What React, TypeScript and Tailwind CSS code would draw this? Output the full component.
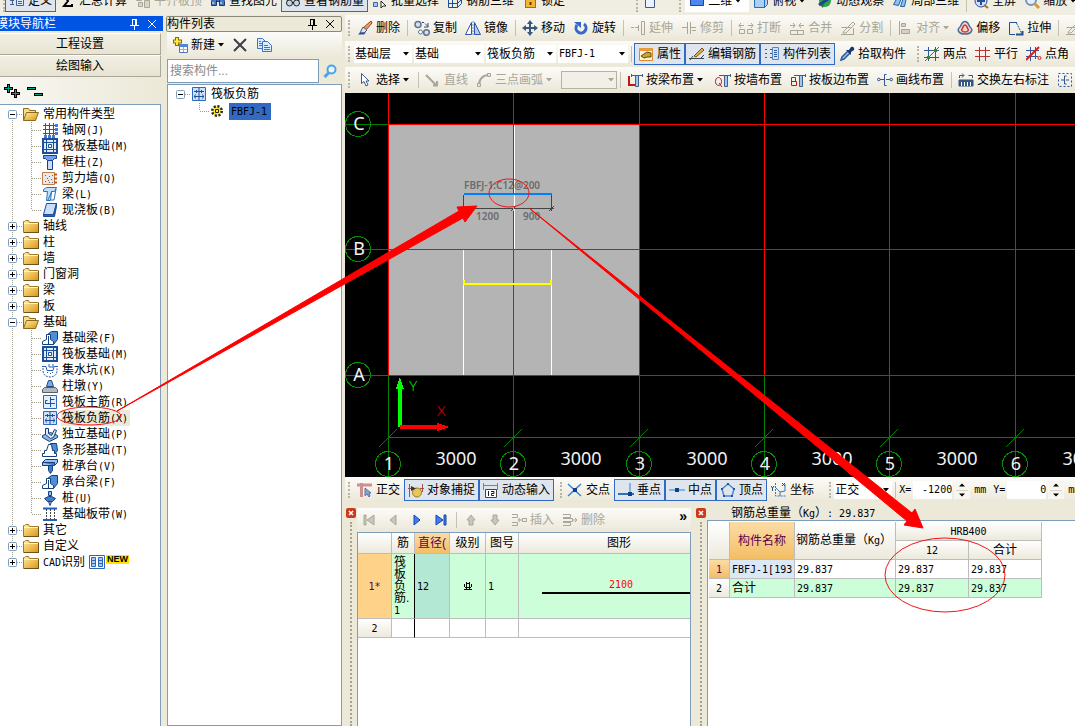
import { type ReactNode } from "react";
import clsx from "clsx";

const pen = { fill: "none", strokeWidth: 1 } as const;
const BLUE = "#1c4f96";
const GREY = "#a9a698";

// 16x16 glyphs shared by the toolbars and the trees
const icons: Record<string, ReactNode> = {
  define: (
    <g {...pen} stroke="#44618f">
      <path d="M1 11.5h4M3.5 3v9M7.5 2.5h7v10h-7z" fill="#dfe8f5" />
      <path d="M9 5.5h4M9 8.5h4M9 10.5h4M1 3.5h4M1 7.5h4" />
    </g>
  ),
  sigma: <path d="M4 3h8v2M4 3l4 5-4 5h8v-2" fill="none" stroke="#000" strokeWidth="2" />,
  level: (
    <g fill="#d8d5c8" stroke={GREY}>
      <path d="M1.5 2.5h5v5h-5zM3.5 9.5h4v4h-4zM9.5 7.5h5v7h-5zM10.500 1.500h3v4h-3z" />
    </g>
  ),
  find: (
    <g fill="#4b7ac4" stroke="#17356e">
      <path d="M1.500 8.500l2-6h3v10h-5zM9.500 2.500h3l2 6v4h-5zM6.500 5.500h3v3h-3z" />
      <path d="M3 9v2M11 9v2" stroke="#fff" />
    </g>
  ),
  glasses: (
    <g {...pen} stroke="#222">
      <circle cx="4.500" cy="10" r="3" fill="#c9d6e8" />
      <circle cx="11.500" cy="10" r="3" fill="#c9d6e8" />
      <path d="M7 9.500h2M2 8l3-4M14 8l-2-4" />
    </g>
  ),
  batch: (
    <g {...pen} stroke="#3f63ad">
      <path d="M1.500 2.500h4v4h-4zM1.500 9.500h4v4h-4z" fill="#a9c4ee" />
      <path d="M8 3.500h6M8 6.500h6" />
      <path d="M9 8l5 5h-3l-2 2z" fill="#fff" stroke="#222" />
    </g>
  ),
  cube: (
    <g {...pen} stroke={BLUE}>
      <path d="M1.500 5.500h9v9h-9zM1.500 5.500l4-4h9v9l-4 4M10.500 5.500l4-4M5.500 1.500v13M1.500 10.500h9l4-4" />
    </g>
  ),
  lock: (
    <g>
      <path d="M5.500 8V4a2.500 2.500 0 0 1 5 0v4" fill="none" stroke="#8a8a8a" strokeWidth="2" />
      <rect x="3.500" y="6.500" width="10" height="8" fill="#f5b535" stroke="#a86d0c" />
      <path d="M8.500 9v3" stroke="#5b3b06" strokeWidth="2" />
    </g>
  ),
  page: <path d="M3.500 1.500h9v13h-9z" fill="#eaf3ff" stroke="#3d5a8c" />,
  screen: <path d="M1.500 3.500h13v9h-13z" fill="#4f86f0" stroke="#1c43a0" />,
  box: (
    <g fill="#a9d0f5" stroke="#2b6cb0">
      <path d="M1.500 5.500l3-3h10v9l-3 3h-10z" />
      <path d="M1.500 5.500h10v9M11.500 5.500l3-3" fill="none" />
    </g>
  ),
  orbit: (
    <g>
      <circle cx="8" cy="8" r="6" fill="#2fa447" />
      <path d="M2 12L14 4" stroke="#1c43a0" strokeWidth="3" />
      <path d="M3 12l3 3 1-4z" fill="#1d7a2f" />
    </g>
  ),
  part3d: (
    <g fill="#8cc0ef" stroke="#2364a8">
      <path d="M1.500 11.500l5-9h4l-4 10zM8.500 13.500l3-9h3l-2 9z" />
    </g>
  ),
  full: (
    <g {...pen}>
      <circle cx="8" cy="8" r="6" fill="#cfe0f8" stroke="#2a4f9a" />
      <path d="M8 4v8M4 8h8" stroke="#2a4f9a" strokeWidth="2" />
      <path d="M11 12l4 3" stroke="#b06a2c" strokeWidth="2" />
    </g>
  ),
  zoom: (
    <g fill="none">
      <circle cx="7" cy="7" r="5" fill="#e3effc" stroke="#7c93b8" strokeWidth="2" />
      <path d="M11 11l4 4" stroke="#d69b28" strokeWidth="3" />
    </g>
  ),
  brush: (
    <g>
      <path d="M14 1l1 2-6 7-3-2z" fill="#f0a05a" stroke="#9c3a2a" />
      <path d="M6 7l4 3-3 3H3z" fill="#dfe3ee" stroke="#49577d" />
      <path d="M1 14.500h6l2-2H3z" fill="#2c4f96" />
    </g>
  ),
  copy: (
    <g {...pen} stroke="#5f7394">
      <circle cx="4" cy="4.500" r="3" fill="#d5e0ee" strokeWidth="1.500" />
      <circle cx="6.500" cy="12" r="2" fill="#fff" />
      <circle cx="12.500" cy="12.500" r="2.800" fill="#d5e0ee" strokeWidth="1.500" />
      <path d="M8 2.500h2M11 3.500l3 3M14 3v4h-4" stroke="#2c4a7c" />
    </g>
  ),
  mirror: (
    <g {...pen} stroke="#2b55ae">
      <path d="M.500 14.500L6.500 2.500v12z" fill="#fff" />
      <path d="M15.500 14.500L9.500 2.500v12z" fill="#b9cdf2" />
      <path d="M8 1v14" stroke="#7c8fb8" strokeDasharray="2 1" />
    </g>
  ),
  move: (
    <g fill="#38587e">
      <path d="M7 4h2v3h3v2H9v3H7V9H4V7h3z" />
      <path d="M8 0l3 4H5zM8 16l3-4H5zM0 8l4-3v6zM16 8l-4-3v6z" />
    </g>
  ),
  rotate: (
    <g>
      <path d="M11 4a5 5 0 1 1-7 1" fill="none" stroke="#3467c9" strokeWidth="3" />
      <path d="M1 2h7v6z" fill="#3467c9" />
    </g>
  ),
  extend: <path d="M1 7.500h3M5 7.500h3M8.500 5v6M11.500 1.500h3v13h-3z" fill="none" stroke={GREY} />,
  trim: <path d="M1 7.500h5M10 7.500h5M6.500 2v12M9.500 2v12M11 10.500h4" fill="none" stroke={GREY} />,
  breakIt: (
    <g fill="none" stroke={GREY}>
      <path d="M1.500 9.500h5v4h-5zM9.500 9.500h5v4h-5zM1 5.500h5M3 3L1 5.500 3 8M10 5.500h5M13 3l2 2.500L13 8" />
    </g>
  ),
  join: (
    <g fill="none" stroke={GREY}>
      <path d="M1.500 10.500h13v4h-13zM1 5.500h5M4 3l2 2.500L4 8M10 5.500h5M12 3l-2 2.500L12 8M8.500 10v4" />
    </g>
  ),
  split: <path d="M1.500 7.500h9M1 14.500h13M4 11l9-9 2 2-9 9H3zM13.500 8v6" fill="none" stroke={GREY} />,
  align: (
    <g fill="#d5d2c5" stroke={GREY}>
      <path d="M2.500 1v14M4.500 3.500h4v3h-4zM4.500 9.500h8v4h-8z" />
    </g>
  ),
  offset: (
    <g fill="none">
      <path d="M8 1.500c4 0 3 4 5.500 6s1.500 6.500-5.500 6.500S0 9.500 2.500 7.500 4 1.500 8 1.500z" fill="#f6d5cf" stroke="#4b6ea0" strokeWidth="1.500" />
      <path d="M8 5c2 0 2 3 3 4s0 3-3 3-4-2-3-3 1-4 3-4z" stroke="#c9392c" strokeWidth="1.500" />
    </g>
  ),
  stretch: (
    <g {...pen} stroke="#22508f">
      <path d="M9 2.500H1.500v12H7" />
      <path d="M8.500 3l5 10" strokeDasharray="2 1" />
      <path d="M8 14.500h6.500V11" strokeWidth="2" />
    </g>
  ),
  property: (
    <g>
      <path d="M1.500 2.500h13v12h-13z" fill="#fff3d6" stroke="#d88a2a" />
      <path d="M1 2h14v3H1z" fill="#e79b3c" />
      <path d="M3 10l6-4 4 1v4H9l-3 1z" fill="#caa62d" stroke="#5b4a12" />
    </g>
  ),
  editBar: (
    <g fill="none">
      <path d="M0 12.500h15M1 14l3-4M12 12l3-3" stroke="#3c4754" strokeWidth="1" />
      <path d="M5 10l8-8 2 2-8 7z" fill="#dfb24a" stroke="#7a4f1b" />
    </g>
  ),
  list: (
    <g {...pen} stroke="#38598f">
      <path d="M1 3.500h3M1 7.500h3M1 11.500h3M6 3.500h2M6 7.500h2M6 11.500h2" strokeDasharray="2 1" />
      <path d="M8.500 1.500h6v12h-6z" fill="#cfe2fb" stroke="#5b86c4" />
      <path d="M10 4.500h3M10 6.500h3M10 8.500h3M10 10.500h3" />
    </g>
  ),
  picker: (
    <g>
      <path d="M2 14l1-3 6-6 2 2-6 6z" fill="#9cc8f0" stroke="#2b5aa0" strokeWidth="1.500" />
      <path d="M7 4h3l2-3c2-1 4 1 3 3l-3 2v3z" fill="#17376e" />
    </g>
  ),
  twoPoint: (
    <g {...pen}>
      <path d="M0 4.500h15M0 11.500h15M4.500 1v14M11.500 1v14" stroke="#33559c" />
      <path d="M1 15L15 1" stroke="#c43333" />
      <path d="M3 10h3v3H3zM10 3h3v3h-3z" fill="#2c8a2c" />
    </g>
  ),
  parallel: (
    <g {...pen}>
      <path d="M0 4.500h15M0 10.500h15" stroke="#b33" />
      <path d="M4.500 1v14M10.500 1v14" stroke="#33559c" />
    </g>
  ),
  pointAngle: (
    <g {...pen}>
      <path d="M0 4.500h13M0 10.500h12M4.500 1v14M9.500 1v12" stroke="#33559c" />
      <path d="M0 14L13 1" stroke="#d42020" strokeWidth="2" />
      <circle cx="13.500" cy="12" r="1.500" stroke="#d42020" />
    </g>
  ),
  cursor: <path d="M4.500 1.500v10l2.500-2 2 4.500 2-1-2-4h3z" fill="#fff" stroke="#39598c" />,
  line: <path d="M1 3l10 10M8 13.500h4V9" fill="none" stroke={GREY} strokeWidth="2" />,
  arc: (
    <g fill="none" stroke={GREY}>
      <path d="M3 13C3 7 7 3 13 3" strokeWidth="2" />
      <path d="M1.500 11.500h3v3h-3zM11.500 1.500h3v3h-3z" fill="#e8e5d9" />
    </g>
  ),
  byBeam: (
    <g fill="none">
      <path d="M2 4v9h6" stroke="#c01818" strokeWidth="2" />
      <path d="M4 3.500h12M8.500 3.500h3v11h-3z" fill="#a8c5e8" stroke="#3d5f92" />
      <path d="M4.500 2v3M15.500 2v3" stroke="#3d5f92" />
    </g>
  ),
  byWall: (
    <g fill="none">
      <path d="M3.500 5.500c-4 0-4 8 0 8s4-8 0-8M4 11l3 4" stroke="#c01818" />
      <path d="M4 3.500h12M9.500 3.500h3v11h-3z" fill="#a8c5e8" stroke="#3d5f92" />
      <path d="M15.500 2v3" stroke="#3d5f92" />
    </g>
  ),
  bySlab: (
    <g fill="none">
      <path d="M1.500 5.500h4v4h-4zM1.500 9.500h5v4h-5z" stroke="#c01818" />
      <path d="M4 3.500h12M9.500 3.500h3v11h-3z" fill="#a8c5e8" stroke="#3d5f92" />
      <path d="M15.500 2v3" stroke="#3d5f92" />
    </g>
  ),
  byLine: (
    <g {...pen} stroke="#2b5599">
      <path d="M3 7.500h4M9 7.500h4M9.500 2.500h-2v11h2" />
      <circle cx="1.800" cy="7.500" r="1.300" />
      <circle cx="14.200" cy="7.500" r="1.300" />
    </g>
  ),
  swap: (
    <g {...pen} stroke="#33557f">
      <path d="M1.500 6V3.500h4M4 1.500l2 2-2 2M14.500 6V3.500h-4" />
      <path d="M1 8h14v6H1z" fill="#33557f" />
      <path d="M3.500 10v4M6.500 10v4M9.500 10v4M12.500 10v4" stroke="#fff" />
    </g>
  ),
  frame: (
    <g {...pen} stroke="#2b5599">
      <path d="M1.500 1.500h13v13h-13z" strokeDasharray="2 2" />
      <path d="M4 8h3M9.500 4h-2v8h2M9 8h3" />
    </g>
  ),
  ortho: (
    <g>
      <path d="M0 3h15M4.500 1v14" stroke="#cf8f8f" strokeWidth="3" />
      <path d="M8 6v8l2-2 2 3 1-1-1-3h2z" fill="#8aa3cc" stroke="#5d78a8" />
    </g>
  ),
  snap: (
    <g>
      <path d="M1.500 2v13M0 6.500h6M12 6.500h4M14.500 2v8" stroke="#a0524a" />
      <circle cx="9" cy="10.500" r="4.500" fill="#e8c65a" stroke="#9c7c1c" />
      <path d="M3 4l5 2.500L3 9z" fill="#333" />
    </g>
  ),
  dynInput: (
    <g {...pen}>
      <path d="M.500 1v7M14.500 1v7M0 3.500h15" stroke="#b86a6a" />
      <path d="M2.500 7.500h11v8h-11z" fill="#fff" stroke="#444" />
      <path d="M5.500 9v5M8 9.500h3v2H8.500v2H11" stroke="#222" />
    </g>
  ),
  cross: (
    <g>
      <path d="M1 2l13 12M14 2L1 14" stroke="#3f7fd0" strokeWidth="1.500" />
      <path d="M6 6h4v4H6z" fill="#123f8c" />
    </g>
  ),
  perp: (
    <g fill="none">
      <path d="M12 1v10" stroke="#7db3ea" strokeWidth="2" />
      <path d="M0 12h16" stroke="#2f6fb8" strokeWidth="2" />
      <path d="M10 10h4v4h-4z" fill="#123f8c" />
    </g>
  ),
  middle: (
    <g>
      <path d="M0 8h16" stroke="#7db3ea" strokeWidth="2" />
      <path d="M6 6h4v4H6z" fill="#123f8c" />
    </g>
  ),
  vertex: (
    <g {...pen} stroke="#4d88d4">
      <path d="M8 2l6 5-2 7H4L2 7z" strokeWidth="1.500" />
      <path d="M7 1h2v2H7zM13 6h2v2h-2zM1 6h2v2H1zM3 13h2v2H3zM11 13h2v2h-2z" fill="#24559c" stroke="none" />
    </g>
  ),
  coord: (
    <g {...pen} stroke="#3675c0">
      <path d="M4.500 1v13h11" strokeDasharray="2 1" />
      <path d="M5 6l4 4 5-1V2M9 10v4" />
      <path d="M0 4l1.500 2L3 4M1.500 6v3M11 1l3 3M14 1l-3 3" stroke="#274a80" />
    </g>
  ),
  create: (
    <g>
      <path d="M5 0v9M1 4.500h9" stroke="#8a6d00" strokeWidth="4" />
      <path d="M5 1v7M2 4.500h7" stroke="#ffe84a" strokeWidth="2" />
      <path d="M7.500 7.500h8v8h-8z" fill="#fff" stroke="#4876bd" />
      <path d="M7 7h9v3H7z" fill="#4d86d9" />
      <path d="M8 12.500h7M11.500 10v5" stroke="#8fb2e4" />
    </g>
  ),
  remove: <path d="M2 2l12 12M14 2L2 14" stroke="#3a3f45" strokeWidth="2" />,
  pages: (
    <g fill="#dcebfd" stroke="#3d74c6">
      <path d="M1.500 1.500h5l3 3v7h-8z" />
      <path d="M6.500 4.500h5l4 4v6h-9z" />
      <path d="M3 4.500h2M3 6.500h3M3 8.500h3M8 8.500h4M8 10.500h6M8 12.500h6" />
    </g>
  ),
  folder: (
    <g>
      <path d="M.500 3.500h1l1-1h3l1 2h9v10H.500z" fill="url(#folderFill)" stroke="#a07a2a" />
      <path d="M1 5.500h14" stroke="#fff6c8" />
      <path d="M1 14.500h15M15.500 5v10" stroke="#6b5320" />
    </g>
  ),
  folderOpen: (
    <g stroke="#8c6a1c">
      <path d="M.500 14.500v-12h5l1 2h6v2" fill="#f7df8c" />
      <path d="M.500 14.500l3-8h12l-3 8z" fill="url(#folderFill)" />
    </g>
  ),
  grid: (
    <g {...pen} stroke="#2a55b4">
      <path d="M3.500 1v12M7.500 1v12M11.500 1v12M1 3.500h12M1 7.500h12M1 11.500h12" strokeWidth="1" />
      <path d="M13 2h3v3h-3zM13 6h3v3h-3zM13 10h3v3h-3zM2 13h3v3H2zM6 13h3v3H6zM10 13h3v3h-3z" fill="#4a78d4" stroke="none" />
    </g>
  ),
  raft: (
    <g {...pen} stroke={BLUE}>
      <path d="M1 1h14v14H1z" fill="#dcebfb" strokeWidth="2" />
      <path d="M4.500 2v12M11.500 2v12M2 4.500h12M2 11.500h12" />
      <path d="M6.500 6.500h3v3h-3z" fill="#fff" />
    </g>
  ),
  column: (
    <g stroke="#1a3f8f">
      <path d="M1.500 1.500h13v3h-2l-2 2h-5l-2-2h-2z" fill="#6fa1ec" />
      <path d="M5.500 6.500h5v9h-5z" fill="#c8dcf8" />
    </g>
  ),
  wall: (
    <g>
      <path d="M.500 2.500h12v12H.500z" fill="#e8e8e8" stroke="#c77a45" />
      <path d="M3 5.500h1M7 6.500h1M5 8.500h1M9 9.500h1M3 11.500h1M7 12.500h1M10 5.500h1M10 12.500h1M6 10.500h1" stroke="#666" />
      <path d="M12 4.500h3M12 8.500h3M12 12.500h3" stroke="#c4561c" strokeWidth="2" />
    </g>
  ),
  beam: (
    <g stroke="#2b71bb">
      <path d="M1.500 3.500l3-2h10l-2 4h-3l-1 9h-4l1-9h-4z" fill="#bfe0fa" />
      <path d="M10 5l-4 9M14 3l-2 11h-3" fill="none" />
    </g>
  ),
  slab: (
    <g stroke={BLUE}>
      <path d="M4.500 1.500h10l-3 11h-10z" fill="#c9e0fa" />
      <path d="M1.500 12.500h10l3-11v3l-2 10h-11z" fill="#2c62b5" />
    </g>
  ),
  foundBeam: (
    <g stroke="#143f7e">
      <path d="M5.500 4.500l4-3h6v8l-4 5h-6z" fill="#4d8fd6" />
      <path d="M.500 14.500v-3l4-2v-5h4v5l3 2v3z" fill="#fff" />
      <path d="M6.500 6v8" />
    </g>
  ),
  pit: (
    <g {...pen} stroke="#2a62b5">
      <path d="M0 4.500h4l1 4h6l1-4h4" />
      <path d="M1 6v3c0 8 14 8 14 0V6" strokeDasharray="2 1" />
      <path d="M5 10.500h1M8 11.500h1M10 10.500h1M7 2v3h4V2" />
    </g>
  ),
  pier: (
    <g stroke="#244a80">
      <path d="M6.500 2.500h3l2 6h-7z" fill="#7fa9e0" />
      <path d="M.500 11.500l2-2h11l2 2v3H.500z" fill="#b3b9c2" stroke="#555e6b" />
    </g>
  ),
  mainBar: (
    <g {...pen} stroke={BLUE}>
      <path d="M1.500 1.500h13v13h-13z" fill="#e3effd" stroke="#2f68c0" />
      <path d="M8.500 3v10M3 9.500h10M3.500 9V6.500h2M8 5.500h4.500" />
    </g>
  ),
  negBar: (
    <g {...pen} stroke={BLUE}>
      <path d="M1.500 1.500h13v13h-13z" fill="#cfe1fa" stroke="#2f68c0" />
      <path d="M8 2v12M3 5.500h10M3 10.500h10M4.500 8.500l-1 2 1 2M11.500 8.500l1 2-1 2M5.500 4v3M10.500 4v3" />
    </g>
  ),
  isolated: (
    <g stroke="#153c74">
      <path d="M.500 9.500l8-3 7 3v2l-8 4-7-4z" fill="#8eb8e8" />
      <path d="M3.500 2.500h3v5l3 2 3-6 2 1-3 7-3 1-5-4z" fill="#dbe9f9" />
    </g>
  ),
  strip: (
    <g stroke="#143f7e">
      <path d="M8.500 1.500h6l1 7-4 5z" fill="#4d8fd6" />
      <path d="M.500 14.500v-3h2v-3h2l2-6h3l1 6h2v3h2v3z" fill="#fff" />
    </g>
  ),
  pileCap: (
    <g stroke="#143f7e">
      <path d="M.500 4.500l3-3h12v3l-3 3h-12z" fill="#9cc3f0" />
      <path d="M.500 4.500h12v3M6.500 7.500h4v5l-2 3-2-3z" fill="#3f7fca" />
    </g>
  ),
  pile: (
    <g stroke="#143f7e">
      <path d="M6.500 1.500h3v4h-3z" fill="#9cc3f0" />
      <path d="M2.500 8.500l4-2h3l4 2-3 3h-5z" fill="#3f7fca" />
      <path d="M6.500 11.500h3l-1.500 4z" fill="#9cc3f0" />
    </g>
  ),
  band: (
    <g {...pen} stroke="#2460b8">
      <path d="M1 2.500h14M1 14h14" strokeWidth="2" />
      <path d="M4.500 3v10M8.500 3v10M12.500 3v10" strokeDasharray="2 1" stroke="#444" />
    </g>
  ),
  book: (
    <g stroke="#2c67b8">
      <path d="M.500 1.500h15v13H.500z" fill="#fff" />
      <path d="M2.500 3.500h4v9h-4zM9.500 3.500h4v9h-4z" fill="#a9cdf5" />
      <path d="M3 6.500h3M3 9.500h3M10 6.500h3M10 9.500h3" />
    </g>
  ),
  gear: (
    <g {...pen}>
      <circle cx="8" cy="8" r="4.500" fill="#ffe92e" stroke="#222" strokeWidth="3" strokeDasharray="2 1.500" />
      <circle cx="8" cy="8" r="3.500" fill="#ffe92e" />
      <path d="M6.500 6.500h3v3h-3z" stroke="#222" />
    </g>
  ),
  insertRow: <path d="M1 2.500h5.500v3H1M1 10.500h5.500v3H1M7 8h4M9 6L7 8l2 2M11.500 6.500h4v3h-4z" fill="none" stroke={GREY} />,
  deleteRow: <path d="M1 2.500h7.500v3H1M1 6.500h9.500v3H1M1 10.500h7.500v3H1M11 8h4M13 6l2 2-2 2" fill="none" stroke={GREY} />,
  first: <path d="M3 3h2v10H3zM13 3v10L6 8z" fill="#c9c7bd" stroke={GREY} />,
  prev: <path d="M11 3v10L5 8z" fill="#c9c7bd" stroke={GREY} />,
  next: <path d="M5 3v10l6-5z" fill="#3d7ff0" stroke="#1646a8" />,
  last: <path d="M11 3h2v10h-2zM3 3v10l7-5z" fill="#3d7ff0" stroke="#1646a8" />,
  up: <path d="M8 3l4 5H10v5H6V8H4z" fill="#c9c7bd" stroke={GREY} />,
  down: <path d="M8 13l4-5H10V3H6v5H4z" fill="#c9c7bd" stroke={GREY} />,
};

function Icon({ name }: { name: string }) {
  return (
    <svg viewBox="0 0 16 16" className="size-4 shrink-0" aria-hidden="true">
      {icons[name]}
    </svg>
  );
}

function Caret({ off }: { off?: boolean }) {
  return (
    <svg viewBox="0 0 6 4" className="h-1 w-1.5 shrink-0" aria-hidden="true">
      <path d="M0 0h6L3 3.500z" fill={off ? GREY : "#000"} />
    </svg>
  );
}

function Grip() {
  return <span className="ml-[3px] h-4 shrink-0 border-l-2 border-dotted border-[#b8b5a4]" />;
}

function Sep() {
  return <span className="ml-[3px] mr-0.5 h-4 w-px shrink-0 bg-[#c5c2b2]" />;
}

type ToolProps = {
  icon: string;
  label?: string;
  on?: boolean;
  off?: boolean;
  menu?: boolean;
};

function Tool({ icon, label, on, off, menu }: ToolProps) {
  return (
    <button
      type="button"
      disabled={off}
      aria-label={label ?? icon}
      className={clsx(
        "flex h-[22px] shrink-0 items-center gap-[3px] whitespace-nowrap border px-[3px]",
        on ? "border-[#316ac5] bg-[#dfe5ec]" : "border-transparent",
        off && "text-[#a9a698]"
      )}
    >
      <Icon name={icon} />
      {label && <span>{label}</span>}
      {menu && <Caret off={off} />}
    </button>
  );
}

function Bar({ children, className }: { children: ReactNode; className?: string }) {
  return (
    <div
      className={clsx(
        "flex h-[26px] items-center overflow-hidden border-b border-[#ece9d8] bg-linear-to-b from-[#fcfbf8] to-[#ebe8d9]",
        className
      )}
    >
      {children}
    </div>
  );
}

function Combo({ value, label, className, off }: { value: string; label: string; className: string; off?: boolean }) {
  return (
    <span className={clsx("relative ml-0.5 shrink-0", className)}>
      <select
        aria-label={label}
        disabled={off}
        className={clsx(
          "h-[18px] w-full appearance-none pl-px pr-3 leading-[18px] text-black",
          off ? "border border-[#b5b2a2] bg-[#f1efe6]" : "bg-white"
        )}
      >
        <option>{value}</option>
      </select>
      <span className="pointer-events-none absolute inset-y-0 right-0 flex w-3 items-center justify-center">
        <Caret off={off} />
      </span>
    </span>
  );
}

function Spin({ label, value, className }: { label: string; value: string; className: string }) {
  return (
    <label className="flex shrink-0 items-center font-['DejaVu_Sans_Mono',monospace] text-[10px]">
      {label}=
      <input defaultValue={value} className={clsx("ml-0.5 h-[18px] bg-white text-right", className)} />
      <svg viewBox="0 0 16 18" className="ml-0.5 h-[18px] w-4 bg-[#f7f6f1]" aria-hidden="true">
        <path d="M5 5.500h6l-3-3zM5 12.500h6l-3 3z" />
        <path d="M2 9.500h12" stroke="#d9d6c8" />
      </svg>
      <span className="ml-1">mm</span>
    </label>
  );
}

const Mono = ({ children }: { children: ReactNode }) => (
  <span className="font-['DejaVu_Sans_Mono',monospace] text-[10px]">{children}</span>
);

type TreeLeaf = { icon: string; label: string; hot: string; active?: boolean };
type TreeNode = { label: string; children?: TreeLeaf[] };

const tree: TreeNode[] = [
  {
    label: "常用构件类型",
    children: [
      { icon: "grid", label: "轴网", hot: "J" },
      { icon: "raft", label: "筏板基础", hot: "M" },
      { icon: "column", label: "框柱", hot: "Z" },
      { icon: "wall", label: "剪力墙", hot: "Q" },
      { icon: "beam", label: "梁", hot: "L" },
      { icon: "slab", label: "现浇板", hot: "B" },
    ],
  },
  { label: "轴线" },
  { label: "柱" },
  { label: "墙" },
  { label: "门窗洞" },
  { label: "梁" },
  { label: "板" },
  {
    label: "基础",
    children: [
      { icon: "foundBeam", label: "基础梁", hot: "F" },
      { icon: "raft", label: "筏板基础", hot: "M" },
      { icon: "pit", label: "集水坑", hot: "K" },
      { icon: "pier", label: "柱墩", hot: "Y" },
      { icon: "mainBar", label: "筏板主筋", hot: "R" },
      { icon: "negBar", label: "筏板负筋", hot: "X", active: true },
      { icon: "isolated", label: "独立基础", hot: "P" },
      { icon: "strip", label: "条形基础", hot: "T" },
      { icon: "pileCap", label: "桩承台", hot: "V" },
      { icon: "foundBeam", label: "承台梁", hot: "F" },
      { icon: "pile", label: "桩", hot: "U" },
      { icon: "band", label: "基础板带", hot: "W" },
    ],
  },
  { label: "其它" },
  { label: "自定义" },
  { label: "CAD识别" },
];

function Toggle({ open, first, last }: { open?: boolean; first?: boolean; last?: boolean }) {
  return (
    <button type="button" aria-label={open ? "折叠" : "展开"} className="shrink-0">
      <svg viewBox="0 0 23 16" className="block h-4 w-[23px]">
        <path
          d={`M12.500 ${first ? 8 : 0}V${last ? 8 : 16}M17 8.500h5`}
          stroke="#9d9a8a"
          strokeDasharray="1 1"
        />
        <rect x="8.500" y="4.500" width="8" height="8" rx="1" fill="#fff" stroke="#7f9db9" />
        <path d={open ? "M10 8.500h5" : "M10 8.500h5M12.500 6v5"} stroke="#000" />
      </svg>
    </button>
  );
}

function NavTree() {
  return (
    <ul className="grow border-r border-t border-[#7f9db9] bg-white pt-px">
      {tree.map((node, i) => (
        <li key={node.label}>
          <div className="flex h-4 items-center whitespace-nowrap">
            <Toggle open={!!node.children} first={i === 0} last={i === tree.length - 1} />
            <Icon name={node.children ? "folderOpen" : "folder"} />
            {node.label === "CAD识别" ? (
              <>
                <span className="mx-1">
                  <Mono>CAD</Mono>识别
                </span>
                <Icon name="book" />
                <strong className="mb-1.5 ml-px bg-[#ffe600] px-px text-[9px] leading-[9px]">NEW</strong>
              </>
            ) : (
              <span className="ml-1">{node.label}</span>
            )}
          </div>
          {node.children && (
            <ul>
              {node.children.map((leaf, j) => (
                <li key={leaf.label} className="flex h-4 items-center whitespace-nowrap">
                  <svg viewBox="0 0 42 16" className="h-4 w-[42px] shrink-0" aria-hidden="true">
                    <path
                      d={`M12.500 0V16M31.500 0V${j === node.children!.length - 1 ? 8 : 16}M32 8.500h9`}
                      stroke="#9d9a8a"
                      strokeDasharray="1 1"
                    />
                  </svg>
                  <Icon name={leaf.icon} />
                  <span className={clsx("ml-[3px] h-4 pl-px pr-0.5 leading-4", leaf.active && "bg-[#ece9d8]")}>
                    {leaf.label}
                    <Mono>({leaf.hot})</Mono>
                  </span>
                </li>
              ))}
            </ul>
          )}
        </li>
      ))}
    </ul>
  );
}

function PinClose() {
  return (
    <svg viewBox="0 0 32 12" className="mr-1 h-3 w-8 shrink-0" fill="none" stroke="currentColor" aria-hidden="true">
      <path d="M5.500 1v6M9.500 1v6M5 1.500h5M3 7.500h9M7.500 8v4M8.500 1v6" />
      <path d="M21 2l8 8M29 2l-8 8" />
    </svg>
  );
}

const columnsX = [43, 168, 294, 419, 544, 670];
const rowsY = [31, 156, 282];

// Bubble around an axis number
function Bubble({ x, y, text }: { x: number; y: number; text: string }) {
  return (
    <>
      <circle cx={x} cy={y} r="12.500" fill="none" stroke="#009000" />
      <text x={x + 1} y={y + 6} textAnchor="middle" fontSize="18" fill="#f2f2f2">
        {text}
      </text>
    </>
  );
}

function Drawing() {
  return (
    <svg
      className="h-[384px] w-full shrink-0 bg-black font-['Noto_Sans',sans-serif]"
      role="img"
      aria-label="绘图区"
      shapeRendering="crispEdges"
    >
      <rect x="44" y="32" width="250" height="250" fill="#b4b4b4" />
      <g stroke="#008000">
        {columnsX.map((x) => (
          <path key={x} d={`M${x + 0.5} 282V384M${x - 9} 354l18 -18`} />
        ))}
        {rowsY.map((y) => (
          <path key={y} d={`M0 ${y + 0.5}H43`} />
        ))}
        <path d="M43 344.500H2000" />
      </g>
      <path d="M169.500 32V156M118.500 157V282M206.500 157V282" stroke="#fff" />
      <g stroke="#ff0000">
        {columnsX.map((x) => (
          <path key={x} d={`M${x + 0.5} 0V282`} />
        ))}
        {rowsY.map((y) => (
          <path key={y} d={`M43 ${y + 0.5}H2000`} />
        ))}
      </g>
      <path d="M119 187v4h87v-4" fill="none" stroke="#ffff00" strokeWidth="2" />
      <path d="M118.500 102v14M206.500 102v16M119 115.500h90M204 118l5-5M166 118l5-5" fill="none" stroke="#444" />
      <path d="M168.500 102v16" stroke="#00ffff" />
      <path d="M119 101h88" stroke="#0080ff" strokeWidth="2" />
      <g fontSize="10" fill="#6b6b6b" fontWeight="600">
        <text x="119" y="96">FBFJ-1:C12@200</text>
        <text x="131" y="127">1200</text>
        <text x="178" y="127">900</text>
      </g>
      {["C", "B", "A"].map((t, i) => (
        <Bubble key={t} x={13} y={rowsY[i]} text={t} />
      ))}
      {columnsX.map((x, i) => (
        <Bubble key={x} x={x} y={371} text={String(i + 1)} />
      ))}
      {columnsX.map((x) => (
        <text key={x} x={x + 68} y="372" textAnchor="middle" fontSize="18" fill="#f2f2f2">
          3000
        </text>
      ))}
      <path d="M55 334V294" stroke="#00ff00" strokeWidth="4" />
      <path d="M51 296l4-12 4 12z" fill="#00ff00" />
      <path d="M55 334H94" stroke="#ff0000" strokeWidth="4" />
      <path d="M92 330l12 4-12 4z" fill="#ff0000" />
      <g fontSize="14" fontWeight="300" fontFamily="Lato, sans-serif">
        <text x="64" y="298" fill="#00ff00">Y</text>
        <text x="92" y="323" fill="#ff0000">X</text>
      </g>
    </svg>
  );
}

function DockEdge() {
  return (
    <div className="flex w-3 shrink-0 flex-col items-center gap-1">
      <button type="button" aria-label="关闭">
        <svg viewBox="0 0 10 10" className="block size-2.5">
          <rect width="10" height="10" rx="2" fill="#cc3a1c" />
          <path d="M3 3l4 4M7 3L3 7" stroke="#fff" strokeWidth="1.500" />
        </svg>
      </button>
      <span className="grow border-l-2 border-dotted border-[#a5a294]" />
    </div>
  );
}

const th = "border-b border-r border-[#bdbdbd] bg-linear-to-b from-white to-[#ece9dc] p-0 font-normal whitespace-nowrap overflow-hidden";
const td = "border-b border-r border-[#bdbdbd] px-0.5 py-0 whitespace-nowrap overflow-hidden";
const picked = "border-b border-r border-[#bdbdbd] bg-linear-to-b from-[#fbdca6] to-[#f3be63] p-0 font-normal text-[#5a0050] whitespace-nowrap overflow-hidden";

function BarTable() {
  return (
    <table className="w-[362px] table-fixed border-separate border-spacing-0">
      <colgroup>
        <col className="w-[34px]" />
        <col className="w-[23px]" />
        <col className="w-[35px]" />
        <col className="w-[36px]" />
        <col className="w-[33px]" />
        <col />
      </colgroup>
      <thead>
        <tr className="h-[21px]">
          <th className={th}></th>
          <th className={th}>筋</th>
          <th className={picked}>直径(</th>
          <th className={th}>级别</th>
          <th className={th}>图号</th>
          <th className={th}>图形</th>
        </tr>
      </thead>
      <tbody>
        <tr className="h-[65px] bg-[#ccffd9]">
          <th className="border-b border-r border-[#bdbdbd] bg-[#ffd28a] p-0 font-normal text-[#5a0050]">
            <Mono>1*</Mono>
          </th>
          <td className="border-b border-r border-b-[#bdbdbd] border-r-black px-0.5 py-0 leading-3">
            筏板负筋.<br />
            <Mono>1</Mono>
          </td>
          <td className={clsx(td, "bg-[#b3e8d5]")}><Mono>12</Mono></td>
          <td className={td}>
            <svg viewBox="0 0 10 10" className="mx-auto size-2.5" fill="none" stroke="#000" role="img" aria-label="HRB400">
              <path d="M3.500 1v8M6.500 1v8M1 8.500h8M3 2.500h4M1.500 3v3M8.500 3v3M2 6.500h6" />
            </svg>
          </td>
          <td className={td}><Mono>1</Mono></td>
          <td className="border-b border-[#bdbdbd] p-0">
            <div className="ml-[23px] border-b-2 border-black pb-px pr-5 text-center leading-3 text-[#ff0000]">
              <Mono>2100</Mono>
            </div>
          </td>
        </tr>
        <tr className="h-[19px]">
          <th className={th}><Mono>2</Mono></th>
          <td className="border-b border-r border-b-[#bdbdbd] border-r-black p-0"></td>
          <td className={td}></td>
          <td className={td}></td>
          <td className={td}></td>
          <td className={td}></td>
        </tr>
      </tbody>
    </table>
  );
}

function WeightTable() {
  const rows = [
    { no: "1", name: <Mono>FBFJ-1[193</Mono>, weights: ["29.837", "29.837", "29.837"] },
    { no: "2", name: "合计", weights: ["29.837", "29.837", "29.837"] },
  ];
  return (
    <table className="w-[333px] table-fixed border-separate border-spacing-0">
      <colgroup>
        <col className="w-[21px]" />
        <col className="w-[65px]" />
        <col className="w-[101px]" />
        <col className="w-[73px]" />
        <col className="w-[73px]" />
      </colgroup>
      <thead>
        <tr className="h-[19px]">
          <th rowSpan={2} className={th}></th>
          <th rowSpan={2} className={picked}>构件名称</th>
          <th rowSpan={2} className={clsx(th, "pl-px text-left")}>
            钢筋总重量（<Mono>Kg</Mono>）
          </th>
          <th colSpan={2} className={th}><Mono>HRB400</Mono></th>
        </tr>
        <tr className="h-[19px]">
          <th className={th}><Mono>12</Mono></th>
          <th className={th}>合计</th>
        </tr>
      </thead>
      <tbody>
        {rows.map((row, i) => (
          <tr key={row.no} className={clsx("h-[19px]", i === 1 && "bg-[#ccffd9]")}>
            <th className={i === 0 ? picked : th}><Mono>{row.no}</Mono></th>
            <td className={clsx(td, i === 0 && "bg-[#dde8f7]")}>{row.name}</td>
            {row.weights.map((w, k) => (
              <td key={k} className={td}><Mono>{w}</Mono></td>
            ))}
          </tr>
        ))}
      </tbody>
    </table>
  );
}

export default function App() {
  return (
    <div className="relative flex h-screen flex-col overflow-hidden bg-[#ece9d8] font-['Liberation_Sans','Noto_Sans_CJK_SC',sans-serif] text-[12px] leading-4 text-black">
      <svg className="absolute size-0" aria-hidden="true">
        <linearGradient id="folderFill" x2="1" y2="1">
          <stop stopColor="#fff0a8" />
          <stop offset="1" stopColor="#dc9410" />
        </linearGradient>
      </svg>

      <header className="flex h-[15px] shrink-0 items-end overflow-hidden bg-[#f0eee3] pb-[3px]">
        <Grip />
        <Tool icon="define" label="定义" on />
        <Tool icon="sigma" label="汇总计算" />
        <Tool icon="level" label="平齐板顶" off />
        <Tool icon="find" label="查找图元" />
        <Tool icon="glasses" label="查看钢筋量" on />
        <Tool icon="batch" label="批量选择" />
        <Tool icon="cube" label="钢筋三维" />
        <Tool icon="lock" label="锁定" />
        <span className="w-16 shrink-0" />
        <Grip />
        <Tool icon="page" />
        <span className="w-3.5 shrink-0" />
        <Grip />
        <span className="ml-1 flex shrink-0 bg-white pr-1">
          <Tool icon="screen" label="二维" menu />
        </span>
        <Tool icon="box" label="俯视" menu />
        <span className="w-1 shrink-0" />
        <Tool icon="orbit" label="动态观察" />
        <Tool icon="part3d" label="局部三维" />
        <Sep />
        <Tool icon="full" label="全屏" />
        <Tool icon="zoom" label="缩放" menu />
      </header>

      <div className="flex min-h-0 grow">
        <nav className="flex w-[163px] shrink-0 flex-col pt-px" aria-label="模块导航栏">
          <div className="flex h-[15px] shrink-0 items-center justify-between overflow-hidden bg-[#0054e3] text-white">
            <h2 className="-ml-1 whitespace-nowrap">模块导航栏</h2>
            <PinClose />
          </div>
          <div className="mr-0.5 mt-0.5 flex grow flex-col">
            <button type="button" className="h-[22px] border border-l-0 border-[#aca899] border-t-white bg-linear-to-b from-[#f1efe4] to-[#e8e4d2]">
              工程设置
            </button>
            <button type="button" className="h-[22px] border border-l-0 border-[#aca899] border-t-white bg-linear-to-b from-[#f1efe4] to-[#e8e4d2]">
              绘图输入
            </button>
            <div className="flex h-[27px] items-center bg-linear-to-r from-[#f8f7f2] to-[#ece9d8] pl-1">
              <svg viewBox="0 0 40 14" className="h-3.5 w-10" aria-hidden="true">
                <path d="M0 4.500h9M4.500 0v9M7 9.500h9M11.500 5v9M23 4.500h9M30 10.500h9" stroke="#000" strokeWidth="3" />
                <path d="M1 4.500h7M4.500 1v7M8 9.500h7M11.500 6v7M24 4.500h7M31 10.500h7" stroke="#00a08a" />
              </svg>
            </div>
            <NavTree />
          </div>
        </nav>

        <section className="ml-[3px] flex w-[176px] shrink-0 flex-col pt-px" aria-label="构件列表">
          <div className="flex h-4 shrink-0 items-center justify-between overflow-hidden rounded-xs border border-[#8b887a]">
            <h2 className="whitespace-nowrap">构件列表</h2>
            <PinClose />
          </div>
          <div className="ml-px flex h-[26px] shrink-0 items-center bg-linear-to-b from-[#fcfbf8] to-[#ebe8d9]">
            <span className="w-px shrink-0" />
            <Tool icon="create" label="新建" menu />
            <Tool icon="remove" />
            <Tool icon="pages" />
          </div>
          <div className="ml-px mt-px flex h-6 shrink-0 items-center">
            <input
              aria-label="搜索构件"
              placeholder="搜索构件..."
              className="h-6 min-w-0 grow border border-[#7f9db9] bg-white px-0.5 placeholder:text-[#8a8a8a]"
            />
            <button type="button" aria-label="搜索" className="flex h-[22px] w-[25px] items-center justify-center">
              <svg viewBox="0 0 14 14" className="size-3.5" fill="none">
                <circle cx="8.500" cy="5.500" r="4" fill="#eaf6ff" stroke="#4aa3e8" strokeWidth="2" />
                <path d="M6 8.500L1.500 13" stroke="#4aa3e8" strokeWidth="3" />
              </svg>
            </button>
          </div>
          <ul className="ml-px mt-px grow border border-[#7f9db9] bg-white">
            <li className="flex h-[18px] items-center">
              <Toggle open first last />
              <Icon name="negBar" />
              <span className="ml-1">筏板负筋</span>
            </li>
            <li className="flex h-4 items-center">
              <svg viewBox="0 0 41 16" className="h-4 w-[41px]" aria-hidden="true">
                <path d="M31.500 0V8M32 8.500h9" stroke="#9d9a8a" strokeDasharray="1 1" />
              </svg>
              <Icon name="gear" />
              <span className="ml-1 bg-[#316ac5] px-0.5 pr-1"><Mono>FBFJ-1</Mono></span>
            </li>
          </ul>
        </section>

        <main className="ml-[3px] flex min-w-0 grow flex-col">
          <Bar>
            <Grip />
            <span className="w-[3px] shrink-0" />
            <Tool icon="brush" label="删除" />
            <Sep />
            <Tool icon="copy" label="复制" />
            <Tool icon="mirror" label="镜像" />
            <Sep />
            <Tool icon="move" label="移动" />
            <Tool icon="rotate" label="旋转" />
            <Sep />
            <Tool icon="extend" label="延伸" off />
            <Tool icon="trim" label="修剪" off />
            <Sep />
            <Tool icon="breakIt" label="打断" off />
            <Tool icon="join" label="合并" off />
            <Tool icon="split" label="分割" off />
            <Sep />
            <Tool icon="align" label="对齐" off menu />
            <Tool icon="offset" label="偏移" />
            <Tool icon="stretch" label="拉伸" />
            <Sep />
            <Tool icon="split" off />
          </Bar>
          <Bar>
            <Grip />
            <span className="w-0.5 shrink-0" />
            <Combo label="楼层" value="基础层" className="w-[58px]" />
            <Combo label="构件大类" value="基础" className="w-[70px]" />
            <Combo label="构件类型" value="筏板负筋" className="w-[70px]" />
            <Combo label="构件" value="FBFJ-1" className="w-[70px] font-['DejaVu_Sans_Mono',monospace] text-[10px]" />
            <Sep />
            <Tool icon="property" label="属性" on />
            <Tool icon="editBar" label="编辑钢筋" on />
            <Tool icon="list" label="构件列表" on />
            <Tool icon="picker" label="拾取构件" />
            <span className="w-1 shrink-0" />
            <Grip />
            <span className="w-px shrink-0" />
            <Tool icon="twoPoint" label="两点" />
            <Tool icon="parallel" label="平行" />
            <Tool icon="pointAngle" label="点角" />
          </Bar>
          <Bar>
            <Grip />
            <span className="w-[3px] shrink-0" />
            <Tool icon="cursor" label="选择" menu />
            <span className="w-0.5 shrink-0" />
            <Sep />
            <Tool icon="line" label="直线" off />
            <Tool icon="arc" label="三点画弧" off menu />
            <span className="w-[3px] shrink-0" />
            <Combo label="弧线参数" value="" className="w-[56px]" off />
            <Sep />
            <Tool icon="byBeam" label="按梁布置" menu />
            <span className="w-1 shrink-0" />
            <Tool icon="byWall" label="按墙布置" />
            <Tool icon="bySlab" label="按板边布置" />
            <Tool icon="byLine" label="画线布置" />
            <Sep />
            <Tool icon="swap" label="交换左右标注" />
            <Tool icon="frame" />
          </Bar>

          <Drawing />

          <Bar className="shrink-0">
            <Grip />
            <span className="w-[3px] shrink-0" />
            <Tool icon="ortho" label="正交" />
            <Tool icon="snap" label="对象捕捉" on />
            <Tool icon="dynInput" label="动态输入" on />
            <span className="w-[3px] shrink-0" />
            <Grip />
            <span className="w-px shrink-0" />
            <Tool icon="cross" label="交点" />
            <Tool icon="perp" label="垂点" on />
            <Tool icon="middle" label="中点" on />
            <Tool icon="vertex" label="顶点" on />
            <Tool icon="coord" label="坐标" />
            <span className="w-2 shrink-0" />
            <Grip />
            <span className="w-px shrink-0" />
            <Combo label="坐标方式" value="正交" className="w-[58px]" />
            <Sep />
            <span className="w-px shrink-0" />
            <Spin label="X" value="-1200" className="w-[39px]" />
            <span className="w-[7px] shrink-0" />
            <Spin label="Y" value="0" className="w-[39px]" />
          </Bar>

          <div className="flex min-h-0 grow pt-[5px]">
            <section className="flex w-[346px] shrink-0" aria-label="钢筋编辑">
              <DockEdge />
              <div className="flex min-w-0 grow flex-col">
                <div className="flex h-6 shrink-0 items-center bg-linear-to-b from-[#fcfbf8] to-[#ebe8d9]">
                  <Tool icon="first" off />
                  <Tool icon="prev" off />
                  <Tool icon="next" />
                  <Tool icon="last" />
                  <Sep />
                  <Tool icon="up" off />
                  <Tool icon="down" off />
                  <Tool icon="insertRow" label="插入" off />
                  <Tool icon="deleteRow" label="删除" off />
                  <span className="mb-2 ml-auto mr-1 text-[14px] font-bold">»</span>
                </div>
                <div className="grow overflow-hidden border border-b-0 border-[#7f9db9] bg-white">
                  <BarTable />
                </div>
              </div>
            </section>
            <section className="ml-1 flex min-w-0 grow" aria-label="钢筋总重量">
              <DockEdge />
              <div className="flex min-w-0 grow flex-col">
                <p className="h-3 pl-6 leading-[10px]">
                  钢筋总重量（<Mono>Kg</Mono>）<Mono>: 29.837</Mono>
                </p>
                <div className="grow border-l border-t border-[#7f9db9] bg-white pl-px pt-px">
                  <WeightTable />
                </div>
              </div>
            </section>
          </div>
        </main>
      </div>

      {/* review marks drawn across the panels */}
      <svg className="pointer-events-none absolute inset-0 size-full" aria-hidden="true">
        <g fill="none" stroke="#f01414">
          <ellipse cx="89" cy="416" rx="32" ry="9" />
          <ellipse cx="509" cy="193" rx="20" ry="14" />
          <ellipse cx="945" cy="575" rx="60" ry="37" />
        </g>
        <path d="M117 411L459 211l-2-4 20-1-12 16-2-4zM529 208L912 513l3-4 8 19-19-3 3-4z" fill="#ff0000" stroke="#ff0000" />
      </svg>
    </div>
  );
}
